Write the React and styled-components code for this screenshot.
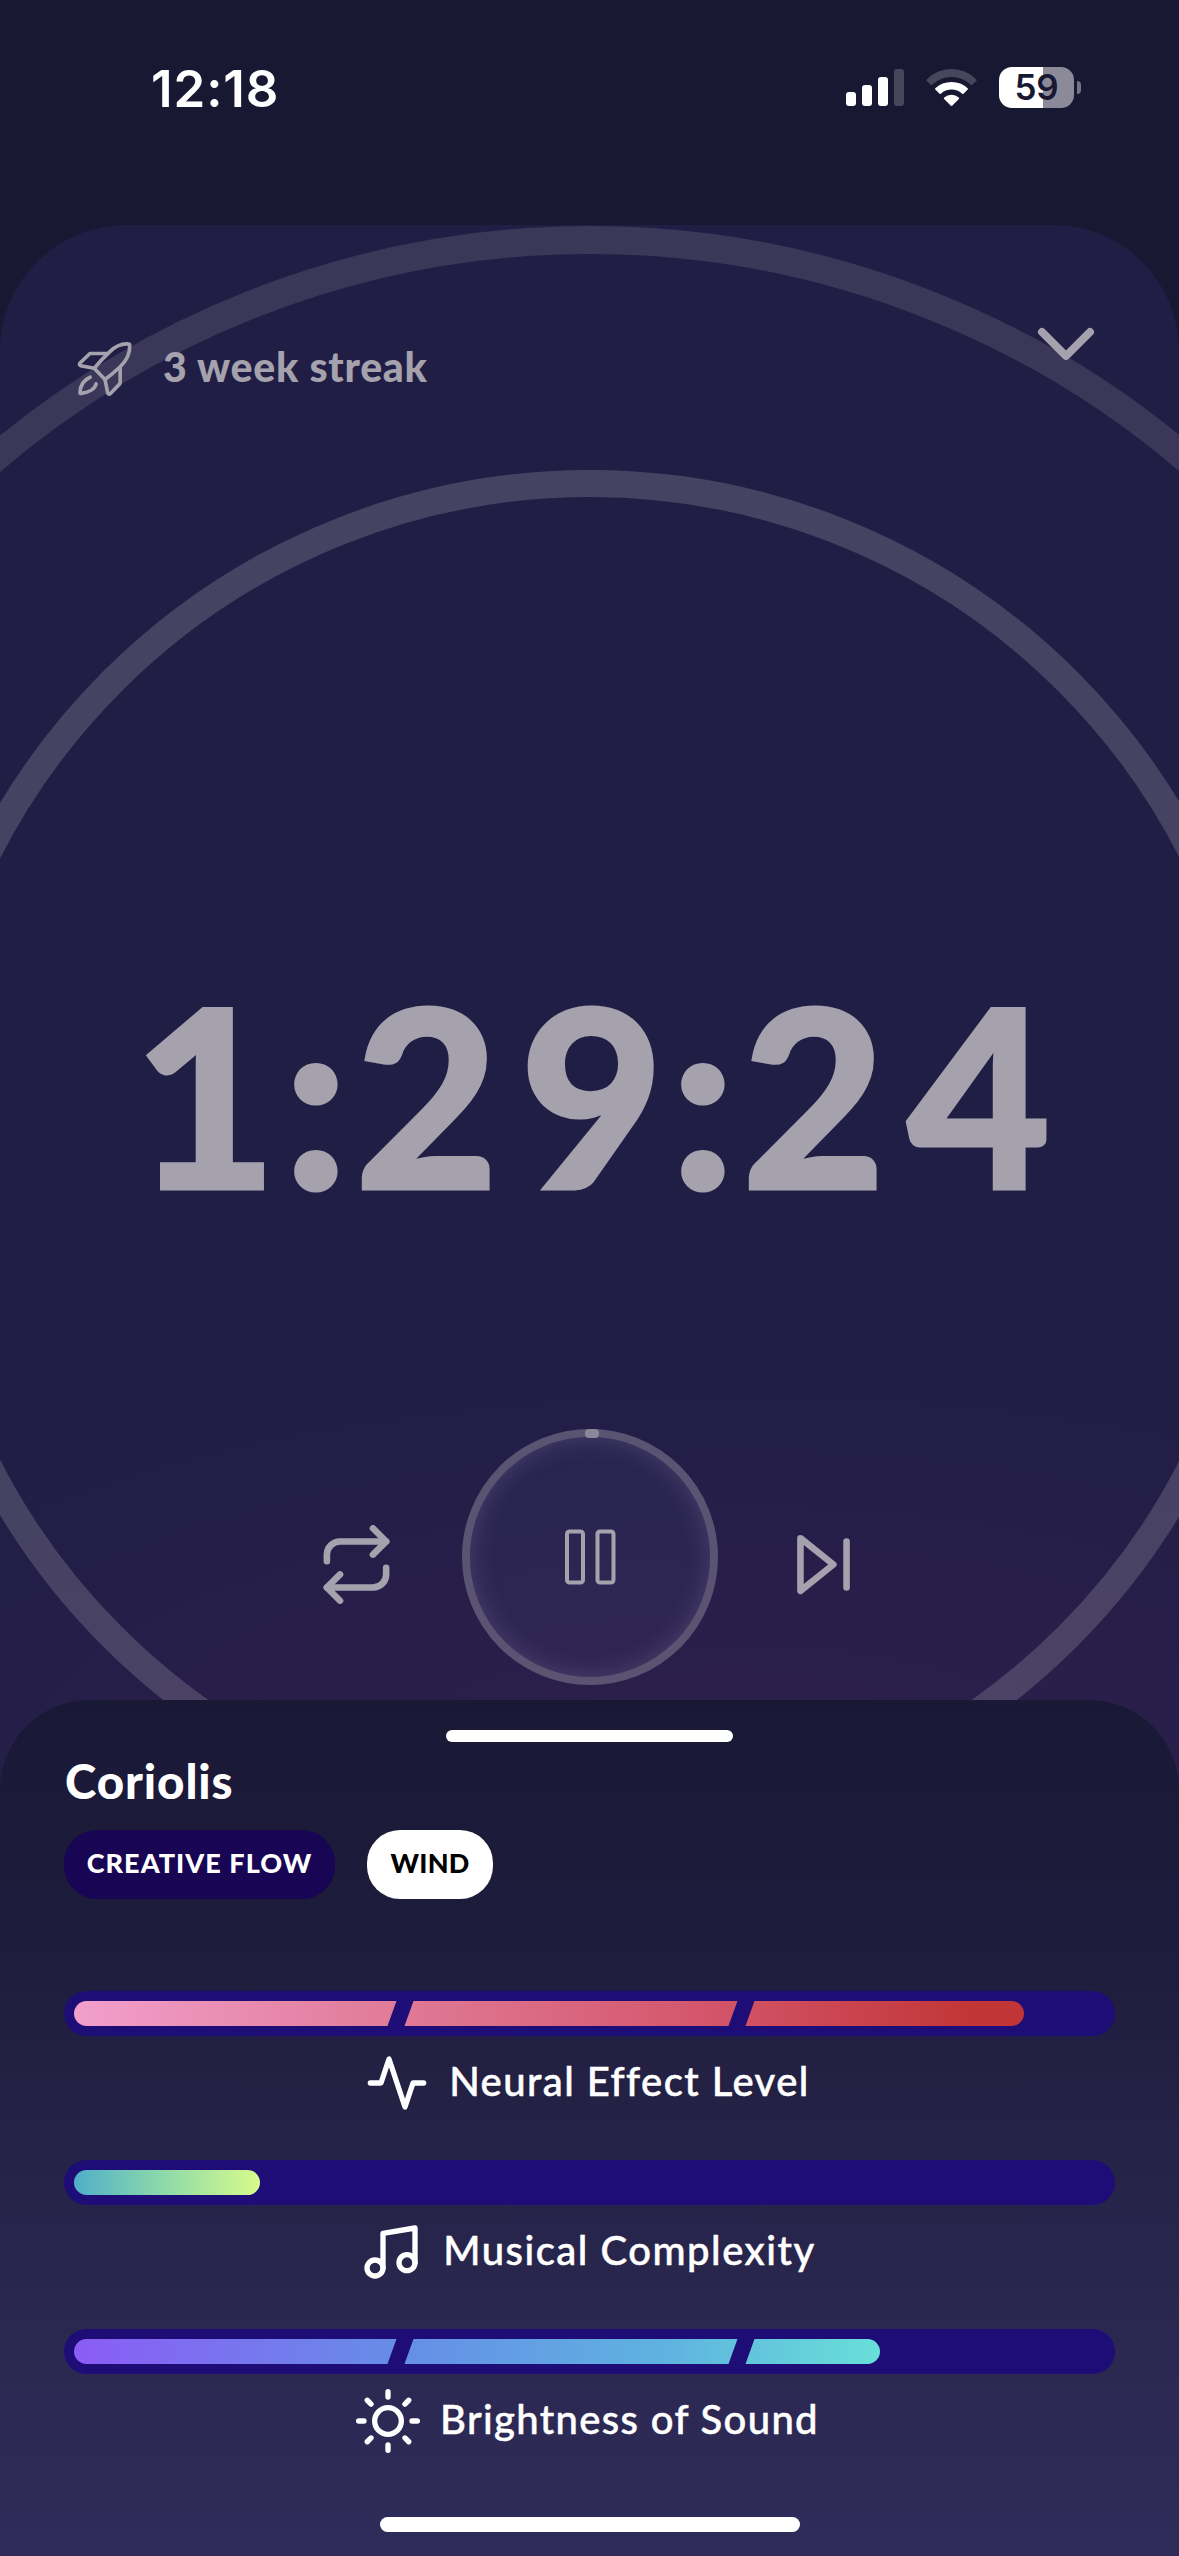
import React from 'react';
import styled, { createGlobalStyle } from 'styled-components';

const dim = '#a5a2ae';
const navy = '#1f0d77';

const GlobalStyle = createGlobalStyle`
  * { box-sizing: border-box; }
  body { margin: 0; background: #191833; }
`;

const Screen = styled.main`
  width: 1179px;
  height: 2556px;
  display: flex;
  flex-direction: column;
  overflow: hidden;
  background: #191833;
  color: #fff;
  font-family: Lato, "Open Sans", sans-serif;
  svg { display: block; flex: none; }
`;

const StatusBar = styled.header`
  height: 225px;
  flex: none;
  display: flex;
  justify-content: space-between;
  align-items: flex-start;
  padding: 67px 98px 0 151px;
`;

const Clock = styled.div`
  padding-top: 1px;
  font: 600 51px/41px Inter, sans-serif;
  letter-spacing: 0.9px;
`;

const StatusIcons = styled.div`
  display: flex;
  height: 41px;
  align-items: center;
`;

const WifiBox = styled.div`
  margin: 0 22px;
`;

const Battery = styled.div`
  width: 75px;
  height: 41px;
  border-radius: 13px;
  background: linear-gradient(90deg, #fff 44px, #8c8a99 44px);
  color: #191833;
  text-align: center;
  font: 600 35px/41px Inter, sans-serif;
  letter-spacing: -0.3px;
`;

const BatteryNub = styled.div`
  width: 4px;
  height: 13px;
  margin-left: 3px;
  border-radius: 0 5px 5px 0;
  background: #75738a;
`;

const Player = styled.section`
  position: relative;
  height: 1575px;
  flex: none;
  overflow: hidden;
  display: flex;
  flex-direction: column;
  border-radius: 126px 126px 0 0;
  background:
    radial-gradient(ellipse 1050px 420px at 62% 1570px, rgba(52, 31, 76, 0.85), rgba(46, 31, 77, 0.6) 40%, rgba(33, 30, 70, 0) 100%),
    #211e46;
`;

const Ring = styled.div`
  position: absolute;
  left: 50%;
  top: ${(p) => p.$center}px;
  width: ${(p) => p.$radius * 2}px;
  height: ${(p) => p.$radius * 2}px;
  transform: translate(-50%, -50%);
  border: ${(p) => p.$thickness}px solid ${(p) => p.$color};
  border-radius: 50%;
`;

const PlayerHeader = styled.div`
  position: relative;
  display: flex;
  justify-content: space-between;
  align-items: flex-start;
  height: 700px;
  padding: 71px 65px 0 77px;
  color: ${dim};
`;

const Streak = styled.div`
  display: flex;
  align-items: center;
  gap: 30px;
  height: 56px;
  margin-top: 45px;
  font-size: 41px;
  font-weight: 900;
  line-height: 48px;
  span { padding-bottom: 5px; letter-spacing: 0.7px; }
`;

const Timer = styled.div`
  position: relative;
  height: 350px;
  padding-left: 5px;
  text-align: center;
  white-space: nowrap;
  color: ${dim};
  font-size: 248px;
  font-weight: 900;
  line-height: 336px;
  -webkit-text-stroke: 3px ${dim};
`;

const Digits = styled.span`
  letter-spacing: ${(p) => p.$after}px;
`;

const Controls = styled.div`
  position: relative;
  display: flex;
  justify-content: center;
  align-items: center;
  gap: 66px;
  height: 256px;
  margin-top: 154px;
  padding-left: 1px;
  color: ${dim};
`;

const SideButton = styled.div`
  padding-top: 15px;
`;

const PauseButton = styled.div`
  position: relative;
  width: 256px;
  height: 256px;
  display: grid;
  place-items: center;
  border: 8px solid #5a5472;
  border-radius: 50%;
  background: rgba(90, 90, 150, 0.12);
  box-shadow: inset 0 0 24px rgba(165, 150, 190, 0.25);
`;

const ProgressDot = styled.div`
  position: absolute;
  top: -8px;
  left: 115px;
  width: 14px;
  height: 9px;
  border-radius: 4px;
  background: #8b8799;
`;

const Sheet = styled.section`
  position: relative;
  flex: none;
  height: 956px;
  margin-top: -100px;
  padding: 30px 64px 24px;
  display: flex;
  flex-direction: column;
  border-radius: 90px 90px 0 0;
  background: linear-gradient(180deg, #191835 0%, #1e1c3c 24%, #28254c 56%, #322e5e 100%);
`;

const Pill = styled.div`
  width: ${(p) => p.$width}px;
  height: ${(p) => p.$height}px;
  flex: none;
  align-self: center;
  border-radius: 8px;
  background: #fff;
`;

const Title = styled.h1`
  margin: 10px 0 21px 1px;
  font-size: 47.5px;
  font-weight: 900;
  line-height: 57px;
  letter-spacing: 0.9px;
`;

const Tags = styled.div`
  display: flex;
  gap: 32px;
  height: 69px;
`;

const Tag = styled.div`
  width: ${(p) => p.$width}px;
  height: 69px;
  border-radius: 33px;
  background: ${(p) => (p.$light ? '#fff' : '#180553')};
  color: ${(p) => (p.$light ? '#000' : '#fff')};
  text-align: center;
  font-size: 27px;
  font-weight: 900;
  line-height: 65px;
  letter-spacing: ${(p) => (p.$light ? 0.2 : 1.05)}px;
  white-space: nowrap;
`;

const Levels = styled.div`
  margin: 92px 0 19px;
`;

const Level = styled.div`
  height: 169px;
`;

const Track = styled.div`
  height: 45px;
  padding: 10px;
  border-radius: 23px;
  background: ${navy};
`;

const Fill = styled.div`
  position: relative;
  overflow: hidden;
  width: ${(p) => p.$width}px;
  height: 25px;
  border-radius: 13px;
  background: linear-gradient(90deg, ${(p) => p.$colors});
`;

const Notch = styled.i`
  position: absolute;
  top: 0;
  left: ${(p) => p.$left}px;
  width: 17px;
  height: 25px;
  background: ${navy};
  transform: skewX(-19.8deg);
`;

const LevelLabel = styled.div`
  display: flex;
  justify-content: center;
  align-items: center;
  gap: 20px;
  height: 64px;
  margin-top: 15px;
  padding-right: 4px;
  font-size: 40px;
  font-weight: 500;
  line-height: 48px;
  -webkit-text-stroke: 0.5px #fff;
  span { padding-bottom: 4px; letter-spacing: ${(p) => p.$tracking}px; }
`;

const Icon = ({ size, children }) => (
  <svg width={size} height={size} viewBox="0 0 24 24" fill="none" stroke="currentColor" strokeWidth="2" strokeLinecap="round" strokeLinejoin="round">
    {children}
  </svg>
);

const Signal = () => (
  <svg width="58" height="37" viewBox="0 0 58 37" fill="#fff">
    <rect x="0" y="23" width="10" height="14" rx="3" />
    <rect x="16" y="16" width="10" height="21" rx="3" />
    <rect x="32" y="8" width="10" height="29" rx="3" />
    <rect x="48" y="0" width="10" height="37" rx="3" fill="#48465c" />
  </svg>
);

const Wifi = () => (
  <svg width="51" height="37" viewBox="0 0 51 37">
    <path d="M0.6 10.4Q11.5 0 25.5 0T50.4 10.4Q51 11 50.4 11.7L46.3 15.8Q45.7 16.4 45 15.8Q36.6 8 25.5 8T6 15.8Q5.3 16.4 4.7 15.8L0.6 11.7Q0 11 0.6 10.4Z" fill="#48465c" />
    <path d="M9.3 19.2Q16 13 25.5 13T41.7 19.2Q42.3 19.9 41.7 20.5L37.5 24.7Q36.8 25.2 36.2 24.7Q31.5 20.6 25.5 20.6T14.8 24.7Q14.2 25.2 13.5 24.7L9.3 20.5Q8.7 19.9 9.3 19.2Z" fill="#fff" />
    <path d="M18.2 28.6Q21.3 25.8 25.5 25.8T32.8 28.6Q33.5 29.3 32.9 29.9L26.4 36.5Q25.5 37.3 24.6 36.5L18.1 29.9Q17.5 29.3 18.2 28.6Z" fill="#fff" />
  </svg>
);

const Rocket = () => (
  <svg width="56" height="56" viewBox="79 92 170 170" fill="none" stroke="currentColor" strokeWidth="11" strokeLinecap="round" strokeLinejoin="round">
    <path d="M131 175C145 158 160 142 178 125C198 105 215 99 236 101Q239 101 239 104C241 133 228 153 210 170C195 184 180 197 164 209Z" />
    <path d="M172 130H120Q118 130 116 132L88 159Q84 164 90 167L131 175" />
    <path d="M210 172V219Q210 221 208 223L180 252Q175 256 172 249L164 209" />
    <path d="M119 202C100 210 89 228 88 248Q88 252 92 251C116 248 134 237 137 222" />
  </svg>
);

const PauseIcon = () => (
  <svg width="51" height="56" viewBox="0 0 51 56" fill="none" stroke="currentColor" strokeWidth="4">
    <rect x="2" y="2.5" width="16" height="51" rx="2.5" />
    <rect x="32.5" y="2.5" width="16" height="51" rx="2.5" />
  </svg>
);

const levels = [
  {
    label: 'Neural Effect Level',
    width: 950,
    notched: true,
    tracking: 1.45,
    colors: '#f29fcc, #df7894 36%, #d4566c 66%, #c23536 95%',
    icon: <polyline points="22 12 18 12 15 21 9 3 6 12 2 12" />,
  },
  {
    label: 'Musical Complexity',
    width: 186,
    tracking: 1.5,
    colors: '#4fafca, #90dba8 50%, #d8fb8b',
    icon: (
      <>
        <path d="M9 18V5l12-2v13" />
        <circle cx="6" cy="18" r="3" />
        <circle cx="18" cy="16" r="3" />
      </>
    ),
  },
  {
    label: 'Brightness of Sound',
    width: 806,
    notched: true,
    tracking: 1.35,
    colors: '#8b5cf6, #668de7 40%, #5fb2e0 73%, #68dfd8',
    icon: (
      <>
        <circle cx="12" cy="12" r="5" />
        <path d="M12 1v2M12 21v2M4.22 4.22l1.42 1.42M18.36 18.36l1.42 1.42M1 12h2M21 12h2M4.22 19.78l1.42-1.42M18.36 5.64l1.42-1.42" />
      </>
    ),
  },
];

export default function App() {
  return (
    <Screen>
      <GlobalStyle />
      <StatusBar>
        <Clock>12:18</Clock>
        <StatusIcons>
          <Signal />
          <WifiBox><Wifi /></WifiBox>
          <Battery>59</Battery>
          <BatteryNub />
        </StatusIcons>
      </StatusBar>

      <Player>
        <Ring $center={936} $radius={935} $thickness={28} $color="#3b3758" />
        <Ring $center={934} $radius={689} $thickness={27} $color="rgba(165, 162, 174, 0.28)" />
        <PlayerHeader>
          <Streak>
            <Rocket />
            <span>3 week streak</span>
          </Streak>
          <Icon size={96}><polyline points="6 9 12 15 18 9" /></Icon>
        </PlayerHeader>
        <Timer>
          <Digits $after={6.5}>1:</Digits>
          <Digits $after={21.5}>2</Digits>
          <Digits $after={6.5}>9:</Digits>
          <Digits $after={21.5}>2</Digits>
          <Digits $after={0}>4</Digits>
        </Timer>
        <Controls>
          <SideButton>
            <Icon size={79}>
              <polyline points="17 1 21 5 17 9" />
              <path d="M3 11V9a4 4 0 0 1 4-4h14" />
              <polyline points="7 23 3 19 7 15" />
              <path d="M21 13v2a4 4 0 0 1-4 4H3" />
            </Icon>
          </SideButton>
          <PauseButton>
            <ProgressDot />
            <PauseIcon />
          </PauseButton>
          <SideButton>
            <Icon size={79}>
              <polygon points="5 4 15 12 5 20 5 4" />
              <line x1="19" y1="5" x2="19" y2="19" />
            </Icon>
          </SideButton>
        </Controls>
      </Player>

      <Sheet>
        <Pill $width={287} $height={12} />
        <Title>Coriolis</Title>
        <Tags>
          <Tag $width={271}>CREATIVE FLOW</Tag>
          <Tag $width={126} $light>WIND</Tag>
        </Tags>
        <Levels>
          {levels.map((l) => (
            <Level key={l.label}>
              <Track>
                <Fill $width={l.width} $colors={l.colors}>
                  {l.notched && <Notch $left={318} />}
                  {l.notched && <Notch $left={659} />}
                </Fill>
              </Track>
              <LevelLabel $tracking={l.tracking}>
                <Icon size={64}>{l.icon}</Icon>
                <span>{l.label}</span>
              </LevelLabel>
            </Level>
          ))}
        </Levels>
        <Pill $width={420} $height={15} />
      </Sheet>
    </Screen>
  );
}
